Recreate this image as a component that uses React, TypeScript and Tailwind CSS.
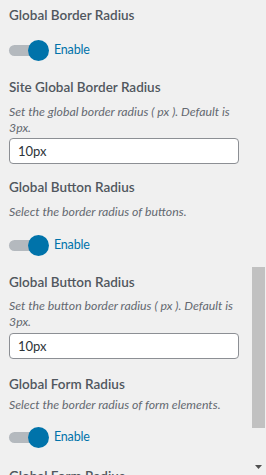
import React from "react";

const Toggle = () => (
  <div className="flex items-center h-[22px]">
    <div className="relative w-[42px] h-[22px]">
      <div className="absolute left-0 top-[6px] w-[36px] h-[11px] rounded-full bg-[#b4b9be]" />
      <div className="absolute left-[19px] top-[1px] w-[21px] h-[21px] rounded-full bg-[#0073aa]" />
    </div>
    <span className="ml-[3px] text-[12.5px] tracking-[-0.2px] text-[#0073aa]">Enable</span>
  </div>
);

const Title = ({ children }: { children: React.ReactNode }) => (
  <h3 className="text-[13.5px] font-semibold text-[#50575e] leading-[18px] whitespace-nowrap">{children}</h3>
);

const Desc = ({ children }: { children: React.ReactNode }) => (
  <p className="w-[232px] text-[12.3px] italic text-[#646970] leading-[16px]">{children}</p>
);

const Field = ({ value }: { value: string }) => (
  <input
    readOnly
    value={value}
    className="block w-[230px] h-[26px] rounded-[4px] border border-[#8c8f94] bg-white px-[8px] text-[13px] text-[#2c3338] outline-none"
  />
);

export default function App() {
  return (
    <div
      className="relative w-[266px] h-[475px] overflow-hidden bg-[#f0f0f0] flex"
      style={{ fontFamily: 'Lato, "Open Sans", sans-serif' }}
    >
      <div className="flex-1 pl-[9px] pt-[6px]">
        {/* Global Border Radius */}
        <Title>Global Border Radius</Title>
        <div className="mt-[15px]">
          <Toggle />
        </div>

        {/* Site Global Border Radius */}
        <div className="mt-[17px]">
          <Title>Site Global Border Radius</Title>
        </div>
        <div className="mt-[8px]">
          <Desc>Set the global border radius ( px ). Default is 3px.</Desc>
        </div>
        <div className="mt-[2px]">
          <Field value="10px" />
        </div>

        {/* Global Button Radius */}
        <div className="mt-[14px]">
          <Title>Global Button Radius</Title>
        </div>
        <div className="mt-[8px]">
          <Desc>Select the border radius of buttons.</Desc>
        </div>
        <div className="mt-[14px]">
          <Toggle />
        </div>

        <div className="mt-[17px]">
          <Title>Global Button Radius</Title>
        </div>
        <div className="mt-[7px]">
          <Desc>Set the button border radius ( px ). Default is 3px.</Desc>
        </div>
        <div className="mt-[3px]">
          <Field value="10px" />
        </div>

        {/* Global Form Radius */}
        <div className="mt-[16px]">
          <Title>Global Form Radius</Title>
        </div>
        <div className="mt-[4px]">
          <Desc>Select the border radius of form elements.</Desc>
        </div>
        <div className="mt-[13px]">
          <Toggle />
        </div>

        <div className="mt-[19px]">
          <Title>Global Form Radius</Title>
        </div>
      </div>

      {/* scrollbar */}
      <div className="relative w-[15px] shrink-0">
        <div className="absolute left-[1px] top-[267px] w-[13px] h-[161px] bg-[#c1c1c1]" />
        <svg className="absolute left-[4px] top-[465px]" width="7" height="4" viewBox="0 0 7 4">
          <path d="M0 0 H7 L3.5 4 Z" fill="#505050" />
        </svg>
      </div>
    </div>
  );
}
